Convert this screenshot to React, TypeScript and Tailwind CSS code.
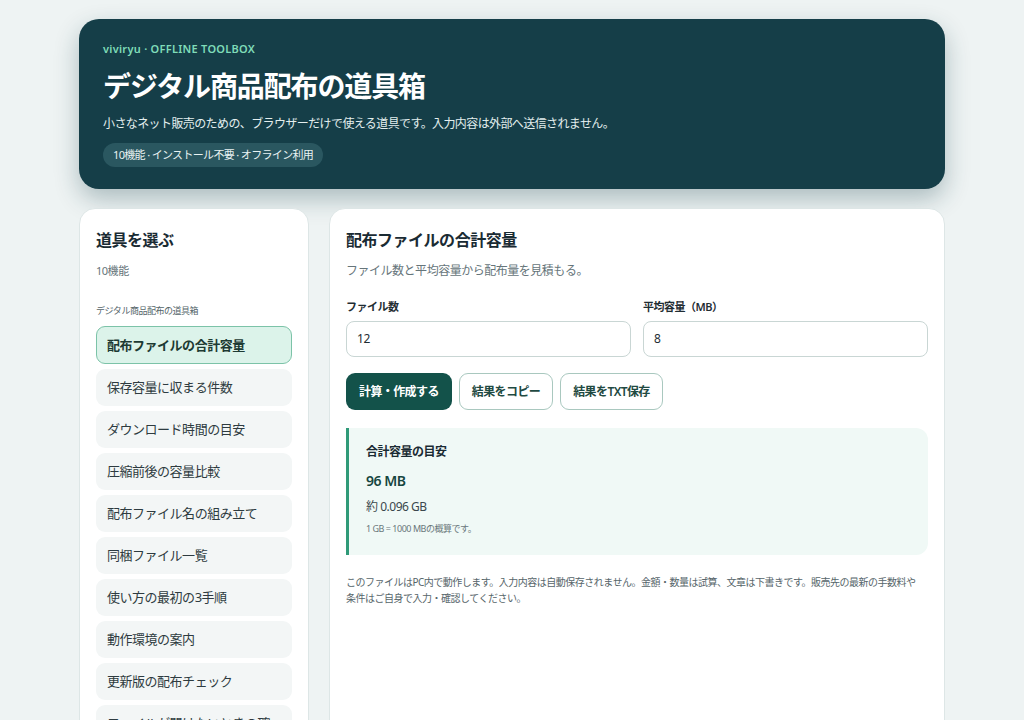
const tools = [
  '配布ファイルの合計容量',
  '保存容量に収まる件数',
  'ダウンロード時間の目安',
  '圧縮前後の容量比較',
  '配布ファイル名の組み立て',
  '同梱ファイル一覧',
  '使い方の最初の3手順',
  '動作環境の案内',
  '更新版の配布チェック',
  'ファイルが開けないときの確認',
]

export default function App() {
  return (
    <div
      className="min-h-screen bg-[#eef3f3] px-[79px] pt-[19px] pb-6 tracking-[-0.03em] text-[#1f2d33]"
      style={{ fontFamily: '"Noto Sans", "Noto Sans CJK JP", sans-serif' }}
    >
      <header className="rounded-[20px] bg-[#153e48] px-6 pt-[22px] pb-[22px] shadow-[0_10px_24px_rgba(21,62,72,0.3)]">
        <p className="text-[11px] font-semibold leading-4 tracking-wide text-[#7fdcb8]">viviryu · OFFLINE TOOLBOX</p>
        <h1 className="mt-[11px] text-[28px] font-bold leading-9 tracking-[-0.04em] text-white">デジタル商品配布の道具箱</h1>
        <p className="mt-[10px] text-[12px] leading-5 tracking-[-0.05em] text-[#e3eeee]">小さなネット販売のための、ブラウザーだけで使える道具です。入力内容は外部へ送信されません。</p>
        <span className="mt-[9px] inline-block rounded-full bg-[#2a5760] px-[10px] py-[3px] text-[11px] leading-[18px] tracking-[-0.06em] text-[#e8f2f2]">10機能 · インストール不要 · オフライン利用</span>
      </header>

      <div className="mt-[19px] grid grid-cols-[230px_1fr] gap-5">
        <aside className="rounded-t-[16px] border border-[#dde6e6] bg-white px-4 pt-[19px] pb-4">
          <h2 className="text-[16px] font-bold leading-6 text-[#1a2b33]">道具を選ぶ</h2>
          <p className="mt-[11px] text-[11px] text-[#66757a]">10機能</p>
          <p className="mt-[24px] text-[9px] text-[#55656a]">デジタル商品配布の道具箱</p>
          <div className="mt-[9px] flex flex-col gap-[5px]">
            {tools.map((t, i) => (
              <div
                key={t}
                className={
                  i === 0
                    ? 'h-[38px] truncate rounded-[9px] border border-[#7cc3a8] bg-[#dcf3ea] px-[10px] text-[13px] font-semibold leading-[36px] text-[#1d3a33]'
                    : 'h-[37px] truncate rounded-[9px] border border-transparent bg-[#f3f6f6] px-[10px] text-[13px] leading-[35px] text-[#2e3b40]'
                }
              >
                {t}
              </div>
            ))}
          </div>
        </aside>

        <main className="rounded-t-[16px] border border-[#dde6e6] bg-white px-4 pt-[19px] pb-6">
          <h2 className="text-[16px] font-bold leading-6 text-[#1a2b33]">配布ファイルの合計容量</h2>
          <p className="mt-[9px] text-[12px] leading-5 text-[#66757a]">ファイル数と平均容量から配布量を見積もる。</p>

          <div className="mt-[18px] grid grid-cols-2 gap-3">
            <label className="flex flex-col">
              <span className="text-[11px] font-semibold leading-4 text-[#1f2d33]">ファイル数</span>
              <div className="mt-[6px] h-[36px] rounded-[8px] border border-[#c9d6d4] px-[10px] text-[12px] leading-[34px]">12</div>
            </label>
            <label className="flex flex-col">
              <span className="text-[11px] font-semibold leading-4 text-[#1f2d33]">平均容量（MB）</span>
              <div className="mt-[6px] h-[36px] rounded-[8px] border border-[#c9d6d4] px-[10px] text-[12px] leading-[34px]">8</div>
            </label>
          </div>

          <div className="mt-[16px] flex gap-[7px]">
            <button className="h-[37px] rounded-[9px] bg-[#13524a] px-[13px] text-[12px] font-bold tracking-[-0.05em] text-white">計算・作成する</button>
            <button className="h-[37px] rounded-[9px] border border-[#a9c8bf] bg-white px-[12px] text-[12px] font-semibold tracking-[-0.05em] text-[#1f4a42]">結果をコピー</button>
            <button className="h-[37px] rounded-[9px] border border-[#a9c8bf] bg-white px-[12px] text-[12px] font-semibold tracking-[-0.05em] text-[#1f4a42]">結果をTXT保存</button>
          </div>

          <section className="mt-[18px] h-[127px] rounded-r-[12px] border-l-[3px] border-[#2f9a78] bg-[#f0f9f6] pl-[17px] pt-[14px]">
            <h3 className="text-[12px] font-bold leading-5 text-[#1a2b33]">合計容量の目安</h3>
            <p className="mt-[9px] text-[14px] font-semibold leading-5 text-[#16463f]">96 MB</p>
            <p className="mt-[6px] text-[12px] leading-5 text-[#3a474c]">約 0.096 GB</p>
            <p className="mt-[4px] text-[9px] leading-4 text-[#6a777b]">1 GB = 1000 MBの概算です。</p>
          </section>

          <p className="mt-[19px] text-[10px] leading-[16px] tracking-[-0.05em] text-[#56656a]">このファイルはPC内で動作します。入力内容は自動保存されません。金額・数量は試算、文章は下書きです。販売先の最新の手数料や<br />条件はご自身で入力・確認してください。</p>
        </main>
      </div>
    </div>
  )
}
